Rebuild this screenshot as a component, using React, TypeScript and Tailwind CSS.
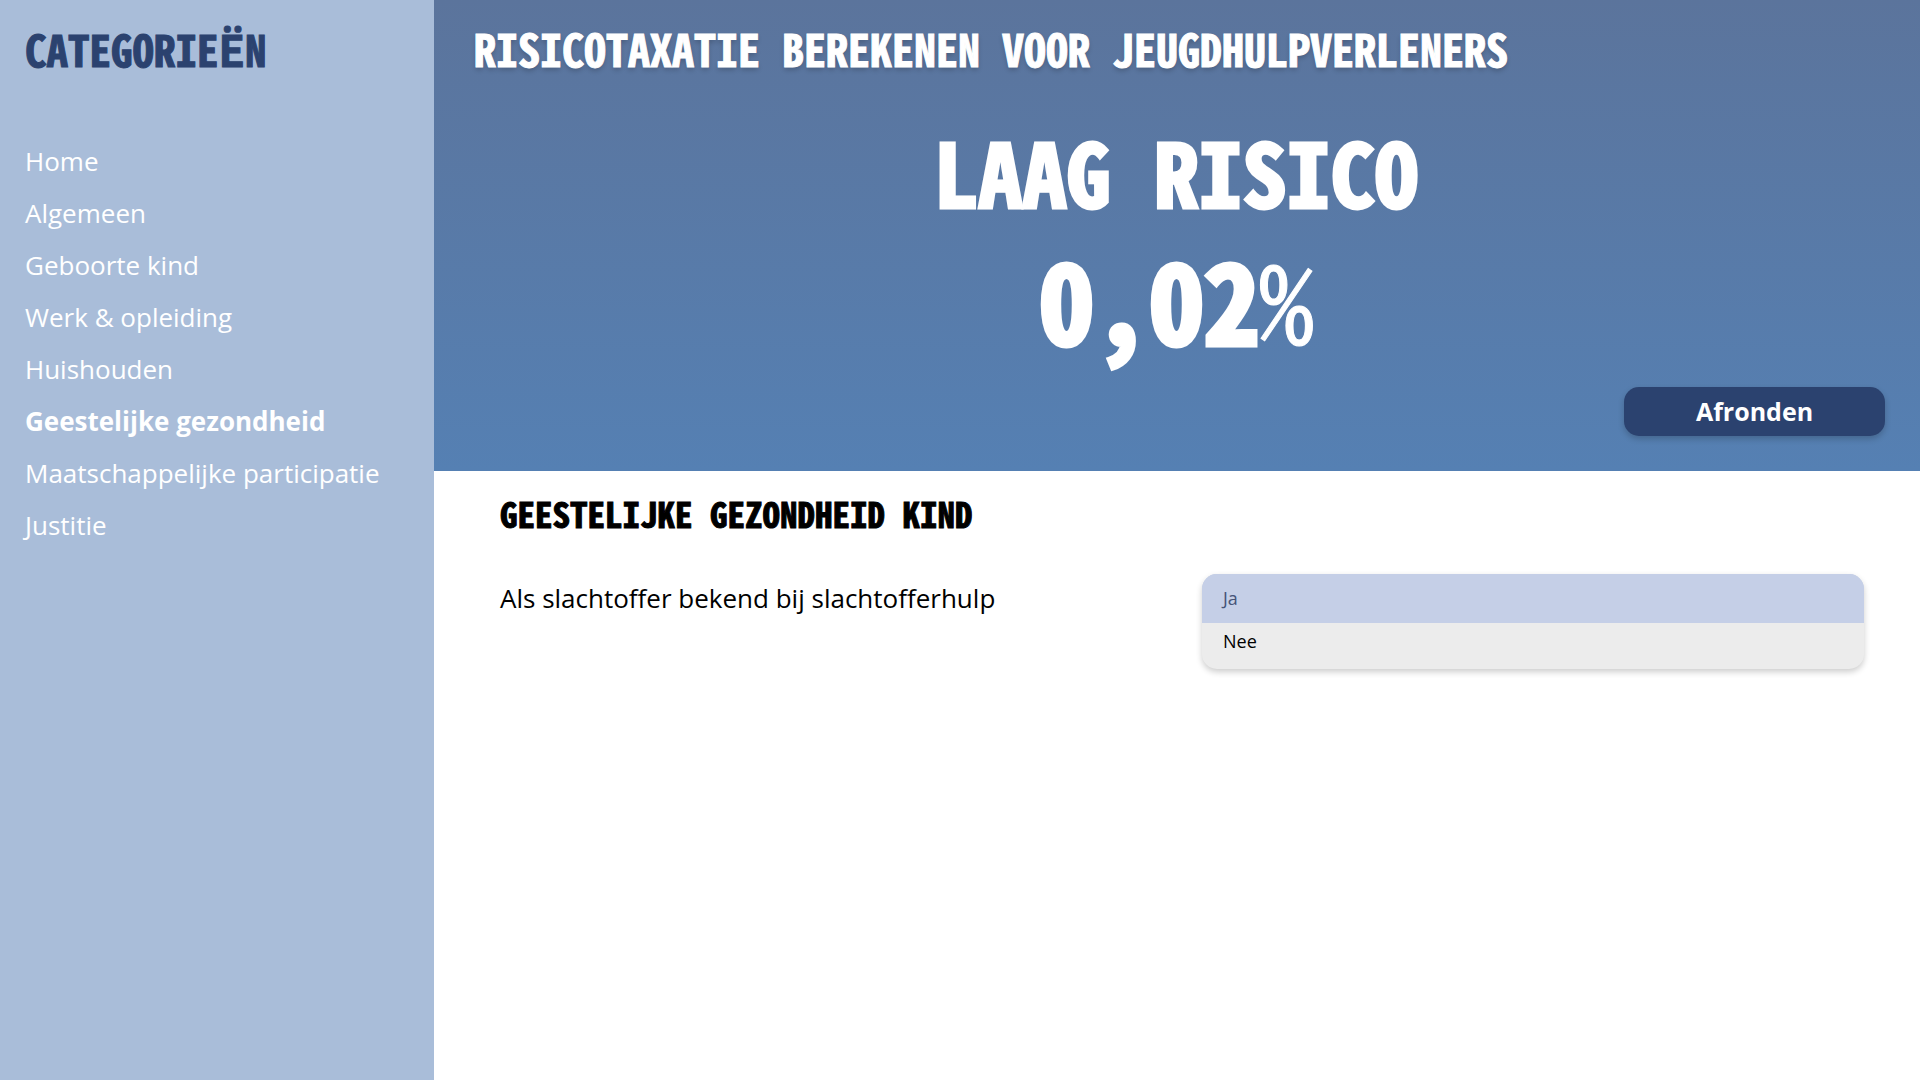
const categories = [
  "Home",
  "Algemeen",
  "Geboorte kind",
  "Werk & opleiding",
  "Huishouden",
  "Geestelijke gezondheid",
  "Maatschappelijke participatie",
  "Justitie",
];

const activeCategory = "Geestelijke gezondheid";

function Sidebar() {
  return (
    <aside className="w-[434px] shrink-0 bg-[#a9bdd9] px-[25px] pt-[22px]">
      <h2 className="font-['Noto_Sans_Mono_CJK_SC','Noto_Sans_CJK_SC',monospace] text-[43px] leading-[52px] font-bold text-[#2b426f] uppercase [-webkit-text-stroke:1px_#2b426f]">
        Categorieën
      </h2>
      <nav className="mt-[61px]">
        <ul>
          {categories.map((name) => (
            <li key={name}>
              <a
                href="#"
                aria-current={name === activeCategory ? "page" : undefined}
                className={
                  name === activeCategory
                    ? "block text-[26px] leading-[52px] font-bold whitespace-nowrap text-white"
                    : "block text-[26px] leading-[52px] whitespace-nowrap text-white"
                }
              >
                {name}
              </a>
            </li>
          ))}
        </ul>
      </nav>
    </aside>
  );
}

function RiskHeader() {
  return (
    <header className="flex flex-col bg-linear-to-b from-[#5b749c] to-[#5580b3] pt-[22px] pr-[35px] pb-[35px] pl-10 text-white">
      <h1 className="font-['Noto_Sans_Mono_CJK_SC','Noto_Sans_CJK_SC',monospace] text-[44px] leading-[52px] font-bold uppercase [-webkit-text-stroke:1px_white] [text-shadow:0_3px_5px_rgba(0,0,0,0.2)]">
        Risicotaxatie berekenen voor jeugdhulpverleners
      </h1>
      <div className="mt-9 pr-1.5 text-center font-['Noto_Sans_Mono_CJK_SC','Noto_Sans_CJK_SC',monospace] font-bold">
        <p className="text-[88px] leading-[120px] uppercase [-webkit-text-stroke:3px_white]">Laag risico</p>
        <p className="text-[110px] leading-[134px] slashed-zero [-webkit-text-stroke:5px_white]">
          0,02<span className="font-normal [-webkit-text-stroke:1px_white]">%</span>
        </p>
      </div>
      <button
        type="button"
        className="mt-[23px] h-[49px] w-[261px] self-end rounded-[15px] bg-[#2b426f] text-[25px] font-bold shadow-[0_3px_6px_rgba(0,0,0,0.2)]"
      >
        Afronden
      </button>
    </header>
  );
}

function QuestionSection() {
  return (
    <section className="pt-5 pr-14 pl-[66px] text-black">
      <h2 className="font-['Noto_Sans_Mono_CJK_SC','Noto_Sans_CJK_SC',monospace] text-[35px] leading-[44px] font-bold uppercase [-webkit-text-stroke:1px_black]">
        Geestelijke gezondheid kind
      </h2>
      <div className="mt-[39px] flex items-start justify-between gap-8">
        <label htmlFor="slachtofferhulp" className="text-[26px] leading-[48px] font-medium">
          Als slachtoffer bekend bij slachtofferhulp
        </label>
        <select
          id="slachtofferhulp"
          size={2}
          defaultValue="ja"
          className="h-[95px] w-[662px] overflow-hidden rounded-[15px] bg-[#ececec] text-lg shadow-[0_3px_6px_rgba(0,0,0,0.2)] outline-none"
        >
          <option
            value="ja"
            className="h-[49px] bg-[#c5cfe7] px-[21px] pt-3 text-[#465478] checked:bg-[linear-gradient(#c5cfe7,#c5cfe7)]"
          >
            Ja
          </option>
          <option value="nee" className="h-[46px] px-[21px] pt-1.5 text-black">
            Nee
          </option>
        </select>
      </div>
    </section>
  );
}

export default function App() {
  return (
    <div className="flex min-h-screen bg-white font-['Open_Sans',sans-serif]">
      <Sidebar />
      <main className="min-w-0 flex-1">
        <RiskHeader />
        <QuestionSection />
      </main>
    </div>
  );
}
